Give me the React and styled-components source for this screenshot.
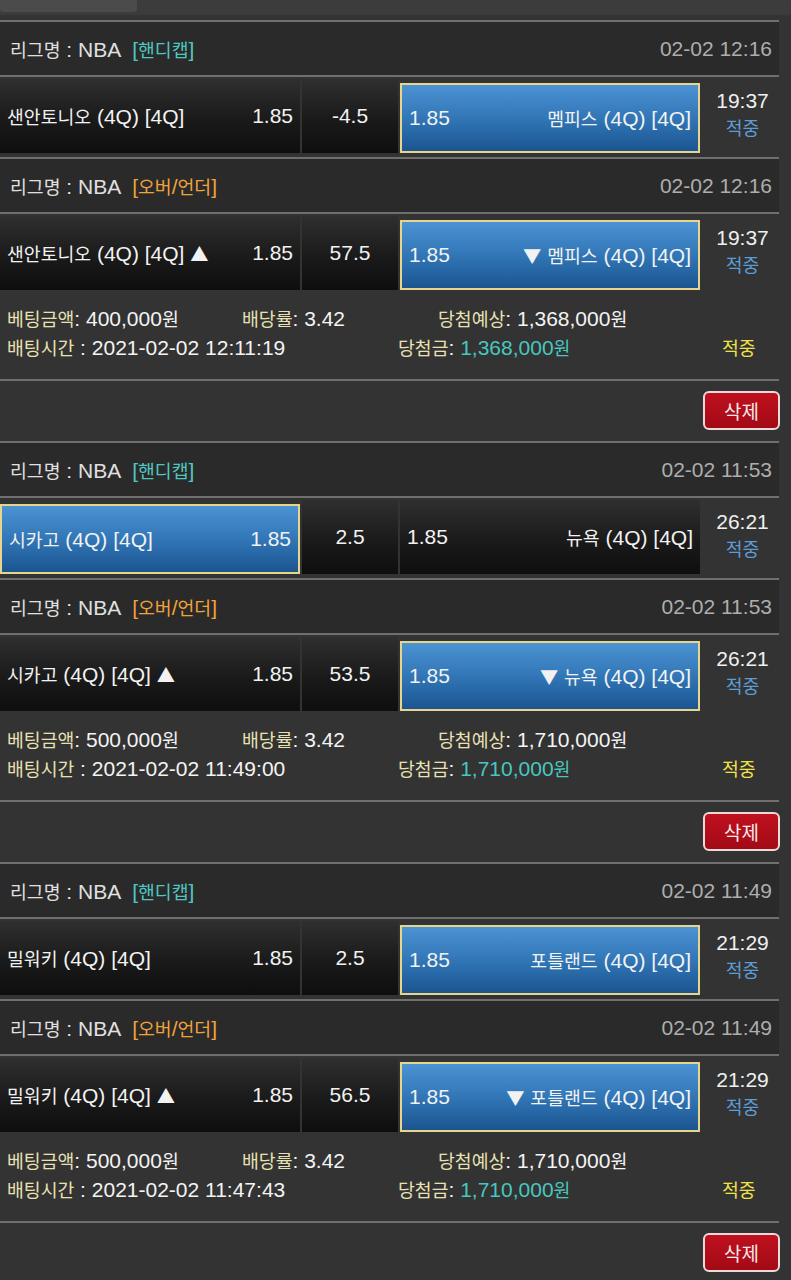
import React from "react";
import styled, { createGlobalStyle } from "styled-components";

const GlobalStyle = createGlobalStyle`
  html, body {
    margin: 0;
    padding: 0;
    background: #333333;
  }
  body {
    font-family: "Liberation Sans", Arial, "Noto Sans CJK KR", sans-serif;
    color: #e6e6e6;
  }
`;

const Page = styled.div`
  width: 791px;
  height: 1280px;
  overflow: hidden;
  background: #333333;
  font-size: 21px;
`;

// hangul (and the ▲▼ marks) are drawn a bit smaller than the latin text, as on the source device
const Ko = styled.span`
  font-family: "Noto Sans CJK KR", sans-serif;
  font-size: 18.3px;
`;

const KO_RUN = /([\u3131-\u318E\uAC00-\uD7A3\u25B2\u25BC]+)/;

const T = ({ children }) =>
  String(children)
    .split(KO_RUN)
    .map((part, i) => (i % 2 === 1 ? <Ko key={i}>{part}</Ko> : part));

const TopStrip = styled.div`
  height: 20px;
  background: linear-gradient(#3c3c3c 0, #3c3c3c 14px, #333 16px);
`;

const ScrollTab = styled.div`
  width: 137px;
  height: 12px;
  background: #4b4b4b;
  border-radius: 0 0 4px 4px;
`;

const List = styled.div`
  width: 779px;
`;

const Group = styled.section`
  display: flex;
  flex-direction: column;
`;

const Line = styled.div`
  height: 2px;
  background: #6f6f6f;
`;

const Header = styled.div`
  height: 53px;
  display: flex;
  align-items: center;
  justify-content: space-between;
  padding: 0 7px 0 10px;
  background: #2a2a2a;
`;

const League = styled.span`
  color: #e0e0e0;
`;

const Tag = styled.span`
  margin-left: 11px;
  color: ${(p) => (p.$type === "ou" ? "#f2a23a" : "#4fc6c1")};
`;

const Date = styled.span`
  color: #aeaeae;
`;

const MatchRow = styled.div`
  display: flex;
  gap: 2px;
  height: 74px;
  margin: 2px 0 4px;
`;

const Cell = styled.div`
  box-sizing: border-box;
  width: ${(p) => p.$width}px;
  display: flex;
  align-items: center;
  justify-content: ${(p) => p.$justify || "space-between"};
  padding: 0 7px;
  color: #f2f2f2;
  white-space: nowrap;
  background: ${(p) =>
    p.$selected
      ? "linear-gradient(#4c93d4, #2f73b3 55%, #1b5590)"
      : "linear-gradient(#2f2f2f, #1a1a1a 55%, #0e0e0e)"};
  border: ${(p) => (p.$selected ? "2px solid #e6d58c" : "none")};
  margin-top: ${(p) => (p.$selected ? "4px" : "0")};
  height: ${(p) => (p.$selected ? "70px" : "74px")};
`;

const TimeCol = styled.div`
  flex: 1;
  display: flex;
  flex-direction: column;
  align-items: center;
  justify-content: center;
  gap: 1px;
  color: #f0f0f0;
  padding: 0 0 4px 4px;
`;

const Result = styled.span`
  color: #5d9dd6;
`;

const Info = styled.div`
  padding: 10px 7px 17px;
  line-height: 29px;
`;

const InfoLine = styled.div`
  display: flex;
  white-space: nowrap;
`;

const Field = styled.span`
  width: ${(p) => (p.$width ? `${p.$width}px` : "auto")};
  color: #f4f4f4;
`;

const Label = styled.span`
  color: #e8e1b2;
`;

const Money = styled.span`
  color: #47c7bf;
`;

const Hit = styled.span`
  color: #f2e24a;
`;

const ButtonBar = styled.div`
  height: 60px;
  display: flex;
  align-items: flex-start;
  justify-content: flex-end;
  padding-top: 10px;
  box-sizing: border-box;
  margin-right: -1px;
`;

const DeleteButton = styled.button`
  width: 77px;
  height: 39px;
  border: 2px solid #efd9d9;
  border-radius: 6px;
  background: linear-gradient(#c0101e, #a20a16);
  color: #fbeaea;
  font-family: "Noto Sans CJK KR", sans-serif;
  font-size: 19px;
  padding: 0;
`;

const groups = [
  {
    bet: "400,000원",
    expect: "1,368,000원",
    time: "2021-02-02 12:11:19",
    matches: [
      { type: "hc", date: "02-02 12:16", home: "샌안토니오 (4Q) [4Q]", line: "-4.5", away: "멤피스 (4Q) [4Q]", pick: "away", clock: "19:37" },
      { type: "ou", date: "02-02 12:16", home: "샌안토니오 (4Q) [4Q] ▲", line: "57.5", away: "▼ 멤피스 (4Q) [4Q]", pick: "away", clock: "19:37" },
    ],
  },
  {
    bet: "500,000원",
    expect: "1,710,000원",
    time: "2021-02-02 11:49:00",
    matches: [
      { type: "hc", date: "02-02 11:53", home: "시카고 (4Q) [4Q]", line: "2.5", away: "뉴욕 (4Q) [4Q]", pick: "home", clock: "26:21" },
      { type: "ou", date: "02-02 11:53", home: "시카고 (4Q) [4Q] ▲", line: "53.5", away: "▼ 뉴욕 (4Q) [4Q]", pick: "away", clock: "26:21" },
    ],
  },
  {
    bet: "500,000원",
    expect: "1,710,000원",
    time: "2021-02-02 11:47:43",
    matches: [
      { type: "hc", date: "02-02 11:49", home: "밀워키 (4Q) [4Q]", line: "2.5", away: "포틀랜드 (4Q) [4Q]", pick: "away", clock: "21:29" },
      { type: "ou", date: "02-02 11:49", home: "밀워키 (4Q) [4Q] ▲", line: "56.5", away: "▼ 포틀랜드 (4Q) [4Q]", pick: "away", clock: "21:29" },
    ],
  },
];

const Match = ({ m }) => (
  <>
    <Line />
    <Header>
      <span>
        <League><T>리그명 : NBA</T></League>
        <Tag $type={m.type}><T>{m.type === "ou" ? "[오버/언더]" : "[핸디캡]"}</T></Tag>
      </span>
      <Date>{m.date}</Date>
    </Header>
    <Line />
    <MatchRow>
      <Cell $width={300} $selected={m.pick === "home"}>
        <span><T>{m.home}</T></span>
        <span>1.85</span>
      </Cell>
      <Cell $width={96} $justify="center">
        {m.line}
      </Cell>
      <Cell $width={300} $selected={m.pick === "away"}>
        <span>1.85</span>
        <span><T>{m.away}</T></span>
      </Cell>
      <TimeCol>
        <span>{m.clock}</span>
        <Result><T>적중</T></Result>
      </TimeCol>
    </MatchRow>
  </>
);

export default function App() {
  return (
    <Page>
      <GlobalStyle />
      <TopStrip>
        <ScrollTab />
      </TopStrip>
      <List>
        {groups.map((g, i) => (
          <Group key={i}>
            {g.matches.map((m, j) => (
              <Match key={j} m={m} />
            ))}
            <Info>
              <InfoLine>
                <Field $width={235}>
                  <Label><T>베팅금액</T></Label>: <T>{g.bet}</T>
                </Field>
                <Field $width={196}>
                  <Label><T>배당률</T></Label>: 3.42
                </Field>
                <Field>
                  <Label><T>당첨예상</T></Label>: <T>{g.expect}</T>
                </Field>
              </InfoLine>
              <InfoLine>
                <Field $width={391}>
                  <Label><T>배팅시간</T></Label> : {g.time}
                </Field>
                <Field $width={324}>
                  <Label><T>당첨금</T></Label>: <Money><T>{g.expect}</T></Money>
                </Field>
                <Hit><T>적중</T></Hit>
              </InfoLine>
            </Info>
            <Line />
            <ButtonBar>
              <DeleteButton>삭제</DeleteButton>
            </ButtonBar>
          </Group>
        ))}
      </List>
    </Page>
  );
}
